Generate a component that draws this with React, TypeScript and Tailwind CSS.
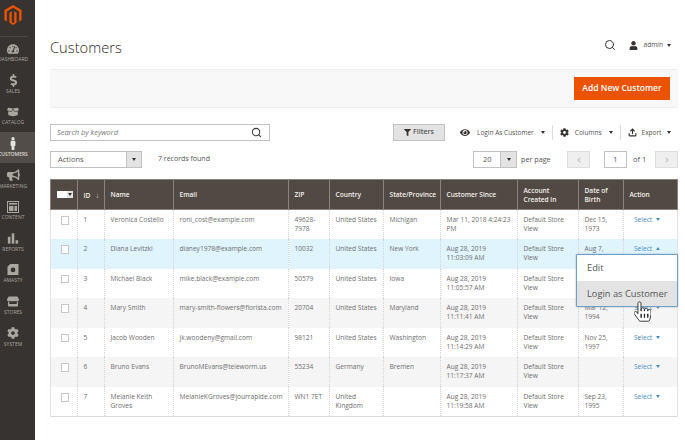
import type { ReactNode } from "react";
import { FaBoxOpen, FaBullhorn, FaCog, FaDollarSign, FaFilter, FaHandPointer, FaMale, FaStore, FaTachometerAlt, FaUser, FaEye, FaChevronLeft, FaChevronRight } from "react-icons/fa";
import { FiSearch, FiUpload } from "react-icons/fi";

type Row = {
  id: number;
  name: string;
  email: string;
  zip: string;
  country: string;
  state: string;
  since: string;
  dob: string;
};

const rows: Row[] = [
  { id: 1, name: "Veronica Costello", email: "roni_cost@example.com", zip: "49628-7978", country: "United States", state: "Michigan", since: "Mar 11, 2018 4:24:23 PM", dob: "Dec 15, 1973" },
  { id: 2, name: "Diana Levitzki", email: "dianey1978@example.com", zip: "10032", country: "United States", state: "New York", since: "Aug 28, 2019 11:03:09 AM", dob: "Aug 7, 1978" },
  { id: 3, name: "Michael Black", email: "mike.black@example.com", zip: "50579", country: "United States", state: "Iowa", since: "Aug 28, 2019 11:05:57 AM", dob: "" },
  { id: 4, name: "Mary Smith", email: "mary-smith-flowers@florista.com", zip: "20704", country: "United States", state: "Maryland", since: "Aug 28, 2019 11:11:41 AM", dob: "Mar 12, 1994" },
  { id: 5, name: "Jacob Wooden", email: "jk.woodeny@gmail.com", zip: "98121", country: "United States", state: "Washington", since: "Aug 28, 2019 11:14:29 AM", dob: "Nov 25, 1997" },
  { id: 6, name: "Bruno Evans", email: "BrunoMEvans@teleworm.us", zip: "55234", country: "Germany", state: "Bremen", since: "Aug 28, 2019 11:17:37 AM", dob: "" },
  { id: 7, name: "Melanie Keith Groves", email: "MelanieKGroves@jourrapide.com", zip: "WN1 7ET", country: "United Kingdom", state: "", since: "Aug 28, 2019 11:19:58 AM", dob: "Sep 23, 1995" },
];

const columns = [
  { label: "ID", width: "w-[27px]" },
  { label: "Name", width: "w-[69px]" },
  { label: "Email", width: "w-[115px]" },
  { label: "ZIP", width: "w-[41px]" },
  { label: "Country", width: "w-[54px]" },
  { label: "State/Province", width: "w-[57px]" },
  { label: "Customer Since", width: "w-[77px]" },
  { label: "Account Created in", width: "w-[61px]" },
  { label: "Date of Birth", width: "w-[45px]" },
  { label: "Action", width: "w-[54px]" },
];

function MagentoLogo() {
  return (
    <svg viewBox="0 0 24 28" className="h-[20px] w-[18px]" fill="#eb5202">
      <path d="M12 0 0 7v14l3.4 2V9l8.6-5 8.6 5v14l3.4-2V7z" />
      <path d="M13.7 8.8v15.4L12 25.2l-1.7-1V8.8L7 10.8v14.2l5 3 5-3V10.8z" />
    </svg>
  );
}

function BarsIcon() {
  return (
    <svg viewBox="0 0 14 12" className="h-[11px] w-[12px]" fill="#aaa6a0">
      <rect x="1" y="4" width="3" height="8" />
      <rect x="5.5" y="0" width="3" height="12" />
      <rect x="10" y="8" width="3" height="4" />
    </svg>
  );
}

function ContentIcon() {
  return (
    <svg viewBox="0 0 12 12" className="h-[12px] w-[12px]" fill="none" stroke="#aaa6a0">
      <rect x="0.5" y="0.5" width="11" height="11" strokeWidth="1" />
      <rect x="2" y="2" width="8" height="1.6" fill="#aaa6a0" stroke="none" />
      <rect x="2" y="5" width="4.5" height="5" fill="#aaa6a0" stroke="none" />
      <rect x="7.5" y="5" width="2.5" height="5" fill="#aaa6a0" stroke="none" />
    </svg>
  );
}

function AmastyIcon() {
  return (
    <svg viewBox="0 0 12 12" className="h-[11px] w-[12px]">
      <path d="M3 0h9v12H0V3z" fill="#aaa6a0" />
      <circle cx="6" cy="6.5" r="2.6" fill="#373330" />
    </svg>
  );
}

const navItems: { label: string; icon: ReactNode; active?: boolean }[] = [
  { label: "DASHBOARD", icon: <FaTachometerAlt className="h-[12px] w-[12px]" /> },
  { label: "SALES", icon: <FaDollarSign className="h-[13px] w-[9px]" /> },
  { label: "CATALOG", icon: <FaBoxOpen className="h-[12px] w-[12px]" /> },
  { label: "CUSTOMERS", icon: <FaMale className="h-[13px] w-[10px] text-[#e4e2df]" />, active: true },
  { label: "MARKETING", icon: <FaBullhorn className="h-[12px] w-[13px]" /> },
  { label: "CONTENT", icon: <ContentIcon /> },
  { label: "REPORTS", icon: <BarsIcon /> },
  { label: "AMASTY", icon: <AmastyIcon /> },
  { label: "STORES", icon: <FaStore className="h-[11px] w-[12px]" /> },
  { label: "SYSTEM", icon: <FaCog className="h-[12px] w-[12px]" /> },
];

function Sidebar() {
  return (
    <aside className="flex w-[35px] shrink-0 flex-col overflow-hidden bg-[#373330]">
      <div className="flex h-[36px] shrink-0 justify-center pr-[9px] pt-[5px]">
        <MagentoLogo />
      </div>
      <div className="h-px w-[28px] bg-[#4d4a46]" />
      <nav className="flex flex-col">
        {navItems.map((item) => (
          <div
            key={item.label}
            className={`flex h-[31.6px] flex-col items-center justify-center gap-[1px] pr-[9px] text-[#aaa6a0] ${item.active ? "bg-[#524d49]" : ""}`}
          >
            <span className="flex h-[13px] items-center">{item.icon}</span>
            <span className={`whitespace-nowrap text-[5px] leading-[7px] ${item.active ? "font-semibold text-[#dedcd9]" : ""}`}>
              {item.label}
            </span>
          </div>
        ))}
      </nav>
    </aside>
  );
}

function Caret({ up }: { up?: boolean }) {
  return (
    <span
      className={`inline-block h-0 w-0 border-x-[2.5px] border-x-transparent ${up ? "border-b-[3px] border-b-current" : "border-t-[3px] border-t-current"}`}
    />
  );
}

function ToolbarLink({ icon, label, gap }: { icon: ReactNode; label: string; gap: string }) {
  return (
    <div className="flex shrink-0 items-center whitespace-nowrap text-[6.5px] text-[#555]">
      {icon}
      <span>{label}</span>
      <span className={`${gap} flex text-[#333]`}>
        <Caret />
      </span>
    </div>
  );
}

function Toolbar() {
  return (
    <div className="mt-[16px] flex flex-col gap-[10px]">
      <div className="flex h-[17px] items-center">
        <div className="flex h-full w-[220px] shrink-0 items-center justify-between border border-[#c2c2c2] pl-[6px] pr-[7px]">
          <span className="text-[7.4px] italic text-[#777]">Search by keyword</span>
          <FiSearch className="h-[11px] w-[11px] text-[#333]" strokeWidth={2.2} />
        </div>
        <div className="ml-[123px] flex h-full w-[52px] shrink-0 items-center justify-center gap-[2px] border border-[#c2c2c2] bg-[#e3e3e3] text-[7px] font-semibold text-[#555]">
          <FaFilter className="h-[7px] w-[7px] text-[#373330]" />
          Filters
        </div>
        <div className="ml-[14px] flex items-center">
          <ToolbarLink gap="ml-[7px]" icon={<FaEye className="mr-[6px] h-[9px] w-[12px] text-[#373330]" />} label="Login As Customer" />
          <div className="mx-[7px] h-[15px] w-px bg-[#ddd]" />
          <ToolbarLink gap="ml-[7px]" icon={<FaCog className="mr-[6px] h-[9px] w-[9px] text-[#373330]" />} label="Columns" />
          <div className="mx-[7px] h-[15px] w-px bg-[#ddd]" />
          <ToolbarLink gap="ml-[6px]" icon={<FiUpload className="mr-[5px] h-[9px] w-[9px] text-[#373330]" strokeWidth={3} />} label="Export" />
        </div>
      </div>
      <div className="flex h-[17px] items-center pr-[7px]">
        <div className="flex h-full w-[92px] items-center justify-between border border-[#c2c2c2] text-[7.5px] text-[#555]">
          <span className="pl-[7px]">Actions</span>
          <span className="flex h-full w-[15px] items-center justify-center border-l border-[#c2c2c2] bg-[#e3e3e3] text-[#333]">
            <Caret />
          </span>
        </div>
        <span className="ml-[16px] text-[7px] text-[#555]">7 records found</span>
        <div className="ml-auto flex h-full items-center text-[7px] text-[#555]">
          <div className="flex h-full w-[44px] items-center justify-between border border-[#c2c2c2]">
            <span className="pl-[9px] text-[7.5px]">20</span>
            <span className="flex h-full w-[16px] items-center justify-center border-l border-[#c2c2c2] bg-[#e3e3e3] text-[#333]">
              <Caret />
            </span>
          </div>
          <span className="ml-[4px] w-[46px] text-[7.2px]">per page</span>
          <span className="flex h-full w-[23px] items-center justify-center border border-[#dedede] bg-[#efefef] text-[#bbb]">
            <FaChevronLeft className="h-[6px] w-[6px]" />
          </span>
          <span className="ml-[14px] flex h-full w-[23px] items-center justify-center border border-[#c2c2c2] text-[7.5px]">1</span>
          <span className="ml-[6px] w-[22px] text-[7.5px]">of 1</span>
          <span className="flex h-full w-[23px] items-center justify-center border border-[#dedede] bg-[#efefef] text-[#bbb]">
            <FaChevronRight className="h-[6px] w-[6px]" />
          </span>
        </div>
      </div>
    </div>
  );
}

function rowBackground(row: Row) {
  if (row.id === 2) return "bg-[#e0f4fd]";
  return row.id % 2 === 0 ? "bg-[#f5f5f5]" : "bg-white";
}

const cell = "border-x border-dotted border-x-[#d4d4d4] pl-[5.5px] pt-[5px] align-top";

function CustomerGrid() {
  return (
    <table className="mt-[11px] w-[627px] table-fixed border-collapse text-[6.6px] leading-[9px] text-[#6e6e6e]">
      <thead>
        <tr className="h-[30px] bg-[#514943] text-left font-semibold text-[#f4f1ee]">
          <th className="w-[27px] border border-[#8a837e] px-[6px]">
            <div className="flex h-[7px] w-[16px]">
              <span className="w-[10px] bg-white" />
              <span className="flex w-[6px] items-center justify-center bg-[#e3e3e3] text-[#333]">
                <Caret />
              </span>
            </div>
          </th>
          {columns.map((col) => (
            <th key={col.label} className={`${col.width} border border-[#8a837e] px-[5.5px] align-middle font-semibold`}>
              {col.label}
              {col.label === "ID" && <span className="ml-[5px] text-[8px] font-normal text-[#ccc]">↓</span>}
            </th>
          ))}
        </tr>
      </thead>
      <tbody className="border-b border-[#dcdcdc]">
        {rows.map((row) => (
          <tr key={row.id} className={`h-[29.6px] ${rowBackground(row)}`}>
            <td className="border-r border-dotted border-r-[#d4d4d4] border-l border-l-[#e3e3e3] [border-left-style:solid] px-[9.5px] pt-[6px] align-top">
              <span className="block h-[8.5px] w-[8.5px] border border-[#c8c8c8] bg-white" />
            </td>
            <td className={cell}>{row.id}</td>
            <td className={`${cell} pr-[1px]`}>{row.name}</td>
            <td className={`${cell} overflow-hidden whitespace-nowrap`}>{row.email}</td>
            <td className={`${cell} pr-[1px]`}>{row.zip}</td>
            <td className={`${cell} pr-[1px]`}>{row.country}</td>
            <td className={`${cell} pr-[1px]`}>{row.state}</td>
            <td className={`${cell} pr-[5px]`}>{row.since}</td>
            <td className={`${cell} pr-[1px]`}>Default Store View</td>
            <td className={`${cell} pr-[10px]`}>{row.dob}</td>
            <td className="border-l border-dotted border-l-[#d4d4d4] border-r border-r-[#e3e3e3] [border-right-style:solid] pl-[10px] pt-[5px] align-top text-[#4a8cc2]">
              <span className="inline-flex items-center gap-[4px]">
                Select
                <Caret up={row.id === 2} />
              </span>
            </td>
          </tr>
        ))}
      </tbody>
    </table>
  );
}

export default function App() {
  return (
    <div className="relative flex h-[440px] w-[685px] overflow-hidden bg-white font-['Open_Sans',sans-serif]">
      <Sidebar />
      <main className="ml-[15px] flex flex-1 flex-col">
        <header className="flex h-[69px] items-start justify-between pr-[14px]">
          <h1 className="mt-[37px] text-[14.7px] leading-[20px] font-light text-[#2f2924]">Customers</h1>
          <div className="mt-[39px] flex items-center text-[6.6px] text-[#555]">
            <FiSearch className="h-[12px] w-[12px] text-[#373330]" strokeWidth={2} />
            <FaUser className="ml-[13px] h-[9px] w-[9px] text-[#373330]" />
            <span className="ml-[5px]">admin</span>
            <span className="ml-[4px] flex text-[#333]">
              <Caret />
            </span>
          </div>
        </header>
        <div className="mr-[7px] flex h-[39px] items-center justify-end border-y border-[#eee] bg-[#f8f8f8] pr-[8px]">
          <button className="flex h-[23px] w-[96px] items-center justify-center bg-[#eb5202] text-[8.5px] font-semibold text-white">
            Add New Customer
          </button>
        </div>
        <Toolbar />
        <CustomerGrid />
      </main>

      <div className="absolute left-[576px] top-[254px] w-[102px] rounded-[1px] border border-[#6d9fc7] bg-white text-[9.3px] text-[#555] shadow-[0_0_2px_rgba(0,0,0,0.3)]">
        <div className="flex h-[26px] items-center px-[10px]">Edit</div>
        <div className="flex h-[25px] items-center whitespace-nowrap bg-[#e3e3e3] px-[10px]">Login as Customer</div>
      </div>
      <FaHandPointer
        className="absolute left-[634px] top-[300px] h-[23px] w-[17px] text-white"
        stroke="#000"
        strokeWidth={20}
      />
    </div>
  );
}
